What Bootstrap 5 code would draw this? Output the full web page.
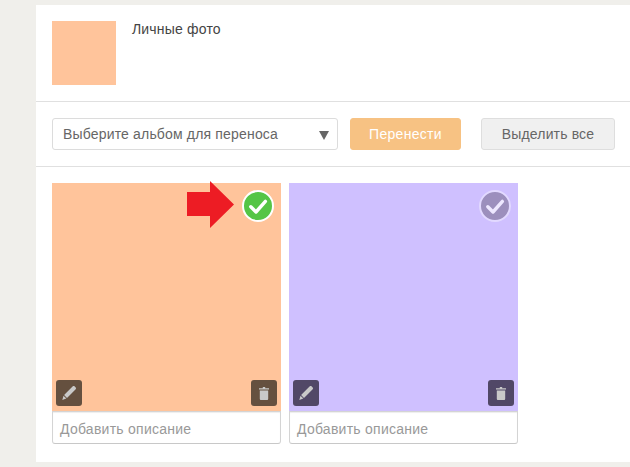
<!DOCTYPE html>
<html lang="ru">
<head>
<meta charset="utf-8">
<title>Личные фото</title>
<link href="https://cdn.jsdelivr.net/npm/bootstrap@5.3.0/dist/css/bootstrap.min.css" rel="stylesheet">
<style>
html,body{height:467px;overflow:hidden}
body{background:#f0efeb;font-family:"Liberation Sans",Arial,sans-serif;font-size:14px;color:#333;padding:5px 0 0 36px}
.sheet{background:#fff;height:457px}
.head-row{height:97px;padding:16px 16px 0;border-bottom:1px solid #e0e0e0;gap:16px}
.album-thumb{width:64px;height:64px;background:#ffc49b}
.album-name{line-height:16px;color:#444;letter-spacing:.18px}
.tool-row{height:65px;padding:16px 15px 0 16px;border-bottom:1px solid #e0e0e0}
.pick{width:286px;height:32px;border:1px solid #dcdcdc;border-radius:3px;padding:0 10px;color:#666;line-height:30px;font-size:14px;letter-spacing:.17px}
.pick-arrow{width:0;height:0;border-left:5px solid transparent;border-right:5px solid transparent;border-top:9px solid #666;margin-right:-2px;margin-top:2px}
.move-btn{width:111px;height:32px;margin-left:12px;background:#f7c283;border:1px solid #f7c283;border-radius:3px;color:#fff;font-size:14px;padding:0;letter-spacing:.3px}
.all-btn{width:134px;height:32px;margin-left:20px;background:#f0f0f0;border:1px solid #dedede;border-radius:3px;color:#666;font-size:14px;padding:0;letter-spacing:.15px}
.grid-row{padding:16px 16px 0;gap:8px}
.photo-cell{width:229px}
.photo{position:relative;height:228px}
.ph-a{background:#ffc49b}
.ph-b{background:#cfc0ff}
.mark-ok{position:absolute;top:7px;right:7px;width:32px;height:32px}
.tool-ic{position:absolute;bottom:5px;width:26px;height:26px;border-radius:3px;display:flex;align-items:center;justify-content:center}
.ph-a .tool-ic{background:#65503f}
.ph-b .tool-ic{background:#514867}
.ic-l{left:4px}
.ic-r{right:4px}
.red-arrow{position:absolute;left:135px;top:-2px;width:47px;height:47px}
.desc{height:33px;margin-top:0;border:1px solid #d4d4d4;border-bottom-color:#c8c8c8;border-radius:0 0 3px 3px;padding:1px 7px 0;line-height:33px;color:#999;font-size:14px;box-shadow:inset 0 1px 1px #eee;letter-spacing:.25px}
</style>
</head>
<body>
<div class="sheet">
  <div class="head-row d-flex">
    <div class="album-thumb"></div>
    <div class="album-name">Личные фото</div>
  </div>
  <div class="tool-row d-flex align-items-start">
    <div class="pick d-flex align-items-center justify-content-between">
      <span>Выберите альбом для переноса</span><span class="pick-arrow"></span>
    </div>
    <button type="button" class="btn move-btn">Перенести</button>
    <button type="button" class="btn all-btn">Выделить все</button>
  </div>
  <div class="grid-row d-flex">
    <div class="photo-cell">
      <div class="photo ph-a">
        <svg class="red-arrow" viewBox="0 0 47 47"><path d="M0 11H23V0L47 23.5 23 47V35H0Z" fill="#ed1c24"/></svg>
        <svg class="mark-ok" viewBox="0 0 32 32"><circle cx="16" cy="16" r="15" fill="#55c546" stroke="#fff" stroke-width="2"/><path d="M8.8 16.8l5.2 5.2 9.4-10.6" fill="none" stroke="#fff" stroke-width="3.4" stroke-linecap="round" stroke-linejoin="round"/></svg>
        <div class="tool-ic ic-l"><svg width="16" height="16" viewBox="0 0 16 16"><path d="M11.8 1.3c.6-.5 1.2-.5 1.7 0l1.2 1.2c.5.5.5 1.1 0 1.7L6 12.9 3.1 10z" fill="#c9c9c9"/><path d="M2.5 10.8l2.8 2.8-4 1.3z" fill="#c9c9c9"/></svg></div>
        <div class="tool-ic ic-r"><svg width="10" height="13" viewBox="0 0 10 13"><path d="M3.8 0h2.4v1.2H10v1.2H0V1.2h3.8zM.8 3.4h8.4v8.3c0 .8-.5 1.3-1.3 1.3H2.1c-.8 0-1.3-.5-1.3-1.3z" fill="#c9c9c9"/></svg></div>
      </div>
      <div class="desc">Добавить описание</div>
    </div>
    <div class="photo-cell">
      <div class="photo ph-b">
        <svg class="mark-ok" viewBox="0 0 32 32"><circle cx="16" cy="16" r="15" fill="#9c8fbd" stroke="#e2d9ff" stroke-width="2"/><path d="M8.8 16.8l5.2 5.2 9.4-10.6" fill="none" stroke="#eee8ff" stroke-width="3.4" stroke-linecap="round" stroke-linejoin="round"/></svg>
        <div class="tool-ic ic-l"><svg width="16" height="16" viewBox="0 0 16 16"><path d="M11.8 1.3c.6-.5 1.2-.5 1.7 0l1.2 1.2c.5.5.5 1.1 0 1.7L6 12.9 3.1 10z" fill="#c9c9c9"/><path d="M2.5 10.8l2.8 2.8-4 1.3z" fill="#c9c9c9"/></svg></div>
        <div class="tool-ic ic-r"><svg width="10" height="13" viewBox="0 0 10 13"><path d="M3.8 0h2.4v1.2H10v1.2H0V1.2h3.8zM.8 3.4h8.4v8.3c0 .8-.5 1.3-1.3 1.3H2.1c-.8 0-1.3-.5-1.3-1.3z" fill="#c9c9c9"/></svg></div>
      </div>
      <div class="desc">Добавить описание</div>
    </div>
  </div>
</div>
<script src="https://cdn.jsdelivr.net/npm/bootstrap@5.3.0/dist/js/bootstrap.bundle.min.js"></script>
</body>
</html>
